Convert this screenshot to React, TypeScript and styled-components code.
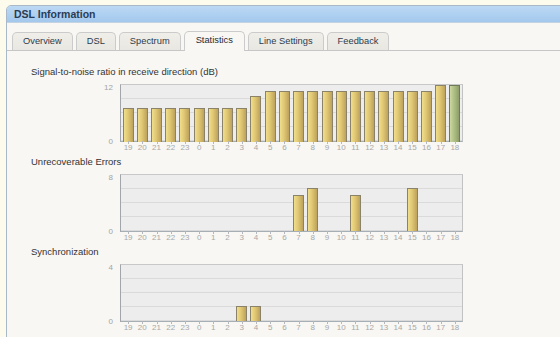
import React from 'react';
import styled, { createGlobalStyle } from 'styled-components';

const GlobalStyle = createGlobalStyle`
  html, body { margin: 0; padding: 0; overflow: hidden; background: #fdfcec; }
  body { font-family: "Liberation Sans", Arial, sans-serif; }
`;

const Page = styled.div`
  width: 560px;
  height: 337px;
  overflow: hidden;
  padding: 5px 0 0 6px;
  box-sizing: border-box;
`;

const Panel = styled.section`
  width: 600px;
  height: 400px;
  border: 1px solid #a9b9c9;
  border-radius: 5px 5px 0 0;
  background: #f8f7f3;
  overflow: hidden;
`;

const Header = styled.header`
  height: 16px;
  line-height: 17px;
  padding-left: 7px;
  background: linear-gradient(#bcd9f4, #a3c8ed);
  border-bottom: 1px solid #c3d3e2;
  font-weight: bold;
  font-size: 10.5px;
  color: #2a3c55;
`;

const TabBar = styled.nav`
  display: flex;
  align-items: flex-end;
  gap: 3px;
  margin-top: 9px;
  padding-left: 5px;
  height: 18px;
  border-bottom: 1px solid #c6c6c6;
`;

const Tab = styled.div<{ $active?: boolean }>`
  height: ${p => (p.$active ? 19 : 17)}px;
  line-height: 17px;
  padding: 0 ${p => (p.$active ? 11 : 10)}px;
  margin-bottom: ${p => (p.$active ? -1 : 0)}px;
  border: 1px solid #cbcbcb;
  border-bottom: none;
  border-radius: 5px 5px 0 0;
  background: ${p => (p.$active ? '#f8f7f3' : 'linear-gradient(#efeee9, #e8e7e2)')};
  font-size: 9.3px;
  color: ${p => (p.$active ? '#1f2a36' : '#2d3b4b')};
  box-sizing: content-box;
`;

const Content = styled.div`
  padding: 15px 0 0 24px;
`;

const ChartBlock = styled.div`
  margin-bottom: 4px;
`;

const Title = styled.div`
  font-size: 9.5px;
  line-height: 12px;
  color: #333;
  margin-bottom: 6px;
`;

const ChartRow = styled.div`
  display: flex;
  align-items: flex-start;
  gap: 7px;
`;

const YAxis = styled.div`
  width: 82px;
  height: 58px;
  display: flex;
  flex-direction: column;
  justify-content: space-between;
  align-items: flex-end;
  font-size: 8px;
  line-height: 8px;
  color: #a4a4a4;
`;

const YLabel = styled.span<{ $bottom?: boolean }>`
  margin-bottom: ${p => (p.$bottom ? -4 : 0)}px;
`;

const Plot = styled.div`
  width: 341px;
  height: 56px;
  border-top: 1px solid #c8c8c8;
  border-right: 1px solid #c2c2c2;
  border-left: 1px solid #a2a6aa;
  border-bottom: 1px solid #a6aeb6;
  background-color: #ededed;
  background-image: repeating-linear-gradient(
    to bottom,
    transparent 0px,
    transparent 13px,
    #dadada 13px,
    #dadada 14px
  );
  display: grid;
  grid-template-columns: repeat(24, 1fr);
  align-items: end;
`;

const Bar = styled.div<{ $green?: boolean }>`
  justify-self: center;
  width: 9px;
  box-sizing: content-box;
  border: 1px solid ${p => (p.$green ? '#6f7a5c' : '#8a836a')};
  border-bottom: none;
  background: ${p =>
    p.$green
      ? 'linear-gradient(to right, #cbd8a0, #afbf84 45%, #8e9e6a)'
      : 'linear-gradient(to right, #f0de8c, #e0c773 45%, #bca25c)'};
`;

const XAxis = styled.div`
  margin-left: 89px;
  width: 341px;
  padding: 0 1px;
  display: grid;
  grid-template-columns: repeat(24, 1fr);
`;

const XLabel = styled.span`
  position: relative;
  text-align: center;
  padding-top: 2px;
  font-size: 8px;
  line-height: 8px;
  color: #a8a8a8;
  &::before {
    content: '';
    position: absolute;
    top: -1px;
    left: 50%;
    width: 1px;
    height: 3px;
    background: #b4b8bc;
  }
`;

const hours = [19, 20, 21, 22, 23, 0, 1, 2, 3, 4, 5, 6, 7, 8, 9, 10, 11, 12, 13, 14, 15, 16, 17, 18];
const idx = (h: number) => (h >= 19 ? h - 19 : h + 5);

const snr = [7, 7, 7, 7, 7, 7, 7, 7, 7, 9.6, ...Array(12).fill(10.8), 12, 12];
const errors = Array(24).fill(0);
errors[idx(7)] = 5;
errors[idx(8)] = 6;
errors[idx(11)] = 5;
errors[idx(15)] = 6;
const sync = Array(24).fill(0);
sync[idx(3)] = 1;
sync[idx(4)] = 1;

type ChartProps = { title: string; max: number; values: number[]; greenLast?: boolean };

function Chart({ title, max, values, greenLast }: ChartProps) {
  return (
    <ChartBlock>
      <Title>{title}</Title>
      <ChartRow>
        <YAxis>
          <YLabel>{max}</YLabel>
          <YLabel $bottom>0</YLabel>
        </YAxis>
        <Plot>
          {values.map((v, i) =>
            v > 0 ? (
              <Bar
                key={i}
                $green={greenLast && i === values.length - 1}
                style={{ height: Math.round((v / max) * 56) }}
              />
            ) : (
              <span key={i} />
            )
          )}
        </Plot>
      </ChartRow>
      <XAxis>
        {hours.map(h => (
          <XLabel key={h}>{h}</XLabel>
        ))}
      </XAxis>
    </ChartBlock>
  );
}

const tabs = ['Overview', 'DSL', 'Spectrum', 'Statistics', 'Line Settings', 'Feedback'];

export default function App() {
  return (
    <Page>
      <GlobalStyle />
      <Panel>
        <Header>DSL Information</Header>
        <TabBar>
          {tabs.map(t => (
            <Tab key={t} $active={t === 'Statistics'}>
              {t}
            </Tab>
          ))}
        </TabBar>
        <Content>
          <Chart title="Signal-to-noise ratio in receive direction (dB)" max={12} values={snr} greenLast />
          <Chart title="Unrecoverable Errors" max={8} values={errors} />
          <Chart title="Synchronization" max={4} values={sync} />
        </Content>
      </Panel>
    </Page>
  );
}
